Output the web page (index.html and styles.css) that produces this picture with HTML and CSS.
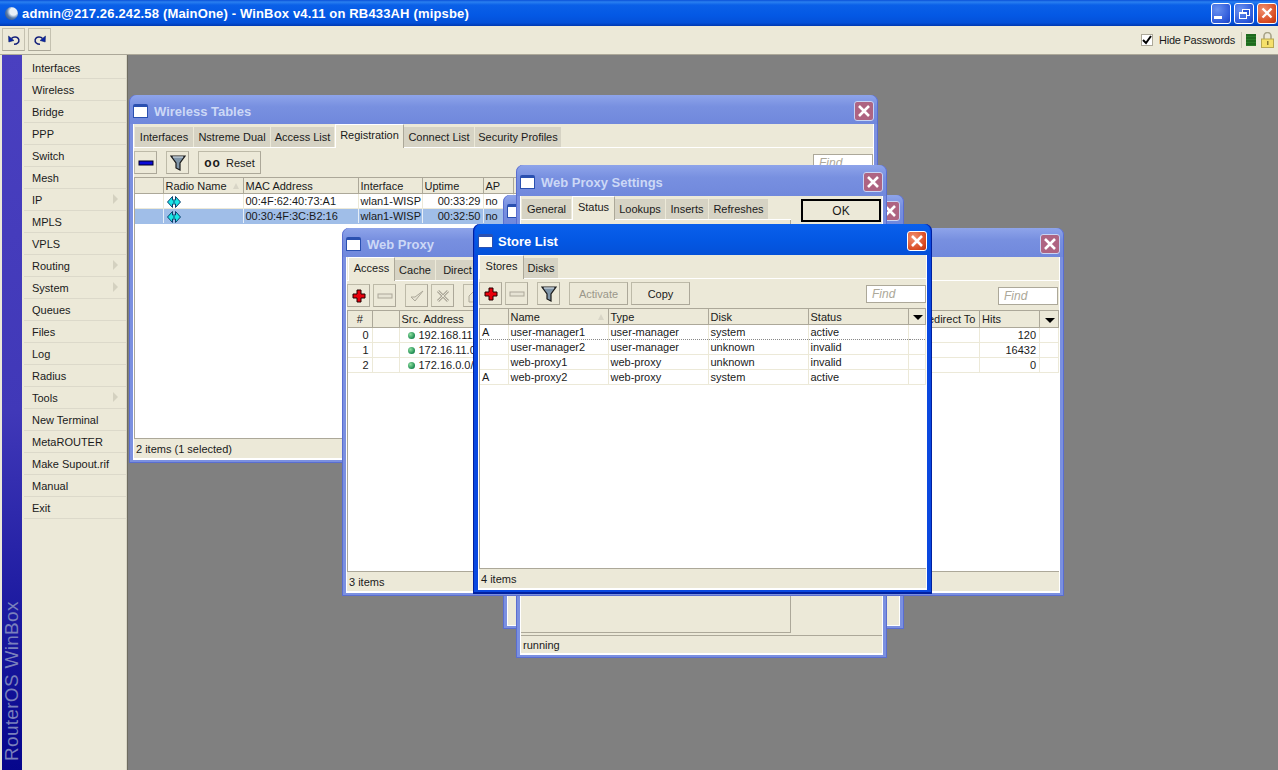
FILE: index.html
```html
<!DOCTYPE html>
<html lang="en">
<head>
    <meta charset="UTF-8">
    <title>admin@217.26.242.58 (MainOne) - WinBox v4.11 on RB433AH (mipsbe)</title>
    <link rel="stylesheet" href="styles.css">
</head>
<body>
    <svg class="defs" width="0" height="0">
        <symbol id="i-x" viewBox="0 0 20 20"><path d="M5 5l10 10M15 5L5 15" stroke="#fff" stroke-width="2.6" fill="none"/></symbol>
        <symbol id="i-plus" viewBox="0 0 16 16"><path d="M6 2h4v4h4v4h-4v4H6v-4H2V6h4z" fill="#e8000c" stroke="#200" stroke-width="1"/></symbol>
        <symbol id="i-minus" viewBox="0 0 16 16"><rect x="1" y="6" width="14" height="4" fill="#0a0ad8" stroke="#002" stroke-width="1"/></symbol>
        <symbol id="i-minus-off" viewBox="0 0 16 16"><rect x="1" y="6" width="14" height="4" fill="#e6e3d4" stroke="#aca899" stroke-width="1"/></symbol>
        <symbol id="i-filter" viewBox="0 0 16 18"><path d="M1 2h14L10 9v7l-4-2V9z" fill="#7f95a8" stroke="#1a1a1a" stroke-width="1.2"/><path d="M3 3h10" stroke="#dfe6ea"/></symbol>
        <symbol id="i-check" viewBox="0 0 16 16"><path d="M2 9l4 4 8-10-8 6z" fill="#e6e3d4" stroke="#aca899"/></symbol>
        <symbol id="i-cross" viewBox="0 0 16 16"><path d="M3 3l10 10M13 3L3 13" stroke="#aca899" stroke-width="3"/><path d="M3 3l10 10M13 3L3 13" stroke="#e6e3d4"/></symbol>
        <symbol id="i-home" viewBox="0 0 16 16"><path d="M8 2l6 6v6H2V8z" fill="#e6e3d4" stroke="#aca899"/></symbol>
        <symbol id="i-link" viewBox="0 0 14 12"><path d="M.5 6L5.500.5V4h3V.5L13.500 6l-5 5.500V8h-3v3.500z" fill="#19e6e6" stroke="#0b3c6c"/><path d="M6 6h2" stroke="#0b3c6c"/></symbol>
        <symbol id="i-undo" viewBox="0 0 16 16"><path d="M5.500 6.500C7 4.500 11.500 4 12.800 7.500c.7 2.800-1.800 4.800-4.800 4.800" fill="none" stroke="#14207a" stroke-width="1.500"/><path d="M2.500 4l.3 6L8 8.500z" fill="#0a24a8" stroke="#0a1f5c" stroke-width=".5"/></symbol>
    </svg>

    <header class="app-title">
        <span class="app-logo"></span>
        <span class="app-caption">admin@217.26.242.58 (MainOne) - WinBox v4.11 on RB433AH (mipsbe)</span>
        <div class="xp-buttons">
            <button class="xp-btn"><span class="glyph-min"></span></button>
            <button class="xp-btn"><span class="glyph-restore"></span></button>
            <button class="xp-btn xp-close"><svg width="20" height="20"><use href="#i-x"/></svg></button>
        </div>
    </header>

    <div class="app-toolbar">
        <button class="tool"><svg width="16" height="16"><use href="#i-undo"/></svg></button>
        <button class="tool"><svg class="flip" width="16" height="16"><use href="#i-undo"/></svg></button>
        <div class="app-right">
            <span class="check-box"><svg width="10" height="10" viewBox="0 0 10 10"><path d="M1 5l3 3 5-7" stroke="#000" stroke-width="2" fill="none"/></svg></span>
            <span class="hide-label">Hide Passwords</span>
            <span class="sep"></span>
            <span class="green-box"></span>
            <svg class="lock" width="13" height="16" viewBox="0 0 13 16">
                <path d="M3 7V4a3.500 3.500 0 0 1 7 0v3" fill="none" stroke="#a8a488" stroke-width="1.600"/>
                <rect x=".5" y="7" width="12" height="8.500" fill="#f5e06a" stroke="#b8a850"/>
                <rect x="6" y="9" width="1.500" height="4" fill="#8a7a30"/>
            </svg>
        </div>
    </div>

    <main class="app-main">
        <div class="brand-strip"><span class="brand-text">RouterOS WinBox</span></div>
        <nav class="menu">
            <a class="menu-item">Interfaces</a>
            <a class="menu-item">Wireless</a>
            <a class="menu-item">Bridge</a>
            <a class="menu-item">PPP</a>
            <a class="menu-item">Switch</a>
            <a class="menu-item">Mesh</a>
            <a class="menu-item has-sub">IP</a>
            <a class="menu-item">MPLS</a>
            <a class="menu-item">VPLS</a>
            <a class="menu-item has-sub">Routing</a>
            <a class="menu-item has-sub">System</a>
            <a class="menu-item">Queues</a>
            <a class="menu-item">Files</a>
            <a class="menu-item">Log</a>
            <a class="menu-item">Radius</a>
            <a class="menu-item has-sub">Tools</a>
            <a class="menu-item">New Terminal</a>
            <a class="menu-item">MetaROUTER</a>
            <a class="menu-item">Make Supout.rif</a>
            <a class="menu-item">Manual</a>
            <a class="menu-item">Exit</a>
        </nav>

        <section class="desktop">
            <!-- Wireless Tables -->
            <div class="win win-wireless">
                <div class="win-title">
                    <span class="win-icon"></span><span class="win-name">Wireless Tables</span>
                    <button class="win-close"><svg width="20" height="20"><use href="#i-x"/></svg></button>
                </div>
                <div class="win-body">
                    <div class="tabs">
                        <span class="tab tab-w1">Interfaces</span>
                        <span class="tab tab-w2">Nstreme Dual</span>
                        <span class="tab tab-w3">Access List</span>
                        <span class="tab tab-w4 active">Registration</span>
                        <span class="tab tab-w5">Connect List</span>
                        <span class="tab tab-w6">Security Profiles</span>
                    </div>
                    <div class="toolbar">
                        <button class="btn"><svg width="16" height="16"><use href="#i-minus"/></svg></button>
                        <button class="btn gap"><svg width="16" height="18"><use href="#i-filter"/></svg></button>
                        <button class="btn gap btn-reset"><b>oo</b>Reset</button>
                        <span class="find">Find</span>
                    </div>
                    <div class="grid-wrap">
                        <table class="grid grid-reg">
                            <colgroup><col><col><col><col><col><col><col></colgroup>
                            <thead><tr><th></th><th class="sorted">Radio Name</th><th>MAC Address</th><th>Interface</th><th>Uptime</th><th>AP</th><th></th></tr></thead>
                            <tbody>
                                <tr><td></td><td><svg class="link" width="14" height="12"><use href="#i-link"/></svg></td><td>00:4F:62:40:73:A1</td><td>wlan1-WISP</td><td class="num">00:33:29</td><td>no</td><td></td></tr>
                                <tr class="selected"><td></td><td><svg class="link" width="14" height="12"><use href="#i-link"/></svg></td><td>00:30:4F:3C:B2:16</td><td>wlan1-WISP</td><td class="num">00:32:50</td><td>no</td><td></td></tr>
                            </tbody>
                        </table>
                    </div>
                    <div class="statusbar">2 items (1 selected)</div>
                </div>
            </div>

            <!-- window hidden behind Web Proxy Settings -->
            <div class="win win-hidden">
                <div class="win-title">
                    <span class="win-icon"></span>
                    <button class="win-close"><svg width="20" height="20"><use href="#i-x"/></svg></button>
                </div>
                <div class="win-body"></div>
            </div>

            <!-- Web Proxy Settings -->
            <div class="win win-settings">
                <div class="win-title">
                    <span class="win-icon"></span><span class="win-name">Web Proxy Settings</span>
                    <button class="win-close"><svg width="20" height="20"><use href="#i-x"/></svg></button>
                </div>
                <div class="win-body">
                    <div class="settings-main">
                        <div class="settings-left">
                            <div class="tabs tabs-settings">
                                <span class="tab tab-s1">General</span>
                                <span class="tab tab-s2 active">Status</span>
                                <span class="tab tab-s3">Lookups</span>
                                <span class="tab tab-s4">Inserts</span>
                                <span class="tab tab-s5">Refreshes</span>
                            </div>
                            <div class="settings-panel"></div>
                        </div>
                        <button class="btn btn-ok">OK</button>
                    </div>
                    <div class="statusbar">running</div>
                </div>
            </div>

            <!-- Web Proxy -->
            <div class="win win-proxy">
                <div class="win-title">
                    <span class="win-icon"></span><span class="win-name">Web Proxy</span>
                    <button class="win-close"><svg width="20" height="20"><use href="#i-x"/></svg></button>
                </div>
                <div class="win-body">
                    <div class="tabs">
                        <span class="tab tab-p1 active">Access</span>
                        <span class="tab tab-p2">Cache</span>
                        <span class="tab tab-p3">Direct</span>
                    </div>
                    <div class="toolbar">
                        <button class="btn"><svg width="16" height="16"><use href="#i-plus"/></svg></button>
                        <button class="btn"><svg width="16" height="16"><use href="#i-minus-off"/></svg></button>
                        <button class="btn gap"><svg width="16" height="16"><use href="#i-check"/></svg></button>
                        <button class="btn"><svg width="16" height="16"><use href="#i-cross"/></svg></button>
                        <button class="btn gap"><svg width="16" height="16"><use href="#i-home"/></svg></button>
                        <span class="find">Find</span>
                    </div>
                    <div class="grid-wrap">
                        <table class="grid grid-proxy">
                            <colgroup><col><col><col><col><col><col></colgroup>
                            <thead><tr><th class="center">#</th><th></th><th>Src. Address</th><th>Redirect To</th><th>Hits</th><th class="menu-col"><span class="drop"></span></th></tr></thead>
                            <tbody>
                                <tr><td class="num">0</td><td></td><td><span class="dot"></span>192.168.11.0/24</td><td></td><td class="num">120</td><td></td></tr>
                                <tr><td class="num">1</td><td></td><td><span class="dot"></span>172.16.11.0/24</td><td></td><td class="num">16432</td><td></td></tr>
                                <tr><td class="num">2</td><td></td><td><span class="dot"></span>172.16.0.0/12</td><td></td><td class="num">0</td><td></td></tr>
                            </tbody>
                        </table>
                    </div>
                    <div class="statusbar">3 items</div>
                </div>
            </div>

            <!-- Store List, active window -->
            <div class="win win-store is-active">
                <div class="win-title">
                    <span class="win-icon"></span><span class="win-name">Store List</span>
                    <button class="win-close"><svg width="20" height="20"><use href="#i-x"/></svg></button>
                </div>
                <div class="win-body">
                    <div class="tabs">
                        <span class="tab tab-t1 active">Stores</span>
                        <span class="tab tab-t2">Disks</span>
                    </div>
                    <div class="toolbar">
                        <button class="btn"><svg width="16" height="16"><use href="#i-plus"/></svg></button>
                        <button class="btn"><svg width="16" height="16"><use href="#i-minus-off"/></svg></button>
                        <button class="btn gap"><svg width="16" height="18"><use href="#i-filter"/></svg></button>
                        <button class="btn gap btn-text is-off">Activate</button>
                        <button class="btn btn-text">Copy</button>
                        <span class="find">Find</span>
                    </div>
                    <div class="grid-wrap">
                        <table class="grid grid-store">
                            <colgroup><col><col><col><col><col><col></colgroup>
                            <thead><tr><th></th><th class="sorted">Name</th><th>Type</th><th>Disk</th><th>Status</th><th class="menu-col"><span class="drop"></span></th></tr></thead>
                            <tbody>
                                <tr class="focused"><td>A</td><td>user-manager1</td><td>user-manager</td><td>system</td><td>active</td><td></td></tr>
                                <tr><td></td><td>user-manager2</td><td>user-manager</td><td>unknown</td><td>invalid</td><td></td></tr>
                                <tr><td></td><td>web-proxy1</td><td>web-proxy</td><td>unknown</td><td>invalid</td><td></td></tr>
                                <tr><td>A</td><td>web-proxy2</td><td>web-proxy</td><td>system</td><td>active</td><td></td></tr>
                            </tbody>
                        </table>
                    </div>
                    <div class="statusbar">4 items</div>
                </div>
            </div>
        </section>
    </main>
</body>
</html>
```

FILE: styles.css
```css
* {
    margin: 0;
    padding: 0;
    box-sizing: border-box;
}

html, body {
    height: 100%;
    overflow: hidden;
}

body {
    display: flex;
    flex-direction: column;
    font-family: "Liberation Sans", Arial, sans-serif;
    font-size: 11px;
    color: #1a1a1a;
    background-color: #ece9d8;
}

.defs {
    position: absolute;
}

button {
    font: inherit;
    color: inherit;
}

/* Main title bar */
.app-title {
    display: flex;
    align-items: center;
    height: 26px;
    padding-left: 5px;
    flex: none;
    background: linear-gradient(#0a50d8 0, #2a80f0 2px, #0a60e8 5px, #0458e4 60%, #0450d8 88%, #0038b0 100%);
}

.app-logo {
    width: 13px;
    height: 13px;
    margin-right: 4px;
    border-radius: 50%;
    background: radial-gradient(circle at 65% 35%, #e8f0f8 0 30%, #5a7ca8 55%, #25406c 100%);
}

.app-caption {
    font-size: 13px;
    font-weight: bold;
    letter-spacing: .16px;
    color: #fff;
    white-space: nowrap;
}

.xp-buttons {
    display: flex;
    gap: 3px;
    margin-left: auto;
    margin-right: 1px;
}

.xp-btn {
    display: flex;
    align-items: center;
    justify-content: center;
    position: relative;
    width: 20px;
    height: 21px;
    border: 1px solid #fff;
    border-radius: 3px;
    background: radial-gradient(circle at 30% 30%, #6a92f0, #2a56d8 75%, #1c3fb8);
}

.xp-close {
    background: radial-gradient(circle at 30% 30%, #f09070, #d84a20 70%, #b83010);
}

.glyph-min {
    width: 8px;
    height: 3px;
    margin: 8px 6px 0 0;
    background-color: #fff;
}

.glyph-restore {
    width: 8px;
    height: 7px;
    margin: 4px 2px 0 0;
    border: 1px solid #fff;
    border-top-width: 2px;
    box-shadow: 3px -3px 0 -1px #2a56d8, 3px -3px 0 0 #fff;
}

/* Top toolbar */
.app-toolbar {
    display: flex;
    align-items: center;
    gap: 3px;
    height: 29px;
    flex: none;
    padding: 0 4px 1px 2px;
    background-color: #ece9d8;
    border-bottom: 1px solid #aca899;
}

.tool {
    display: flex;
    align-items: center;
    justify-content: center;
    width: 23px;
    height: 23px;
    background-color: #ece9d8;
    border: 1px solid #c4c1b0;
    border-bottom-color: #aca899;
}

.flip {
    transform: scaleX(-1);
}

.app-right {
    display: flex;
    align-items: center;
    margin-left: auto;
}

.check-box {
    display: flex;
    align-items: center;
    justify-content: center;
    width: 12px;
    height: 12px;
    background-color: #fff;
    border: 1px solid #aca899;
}

.hide-label {
    margin: 0 6px;
    letter-spacing: -.25px;
}

.sep {
    width: 1px;
    height: 16px;
    background-color: #c8c5b4;
    margin-right: 4px;
}

.green-box {
    width: 10px;
    height: 12px;
    margin-right: 5px;
    background: repeating-linear-gradient(#1e6a1e 0 2px, #2a7c2a 2px 3px);
}

/* Layout below the toolbar */
.app-main {
    display: flex;
    flex: 1;
    min-height: 0;
    padding-left: 2px;
}

.brand-strip {
    display: flex;
    justify-content: center;
    width: 20px;
    flex: none;
    background: linear-gradient(#4a40c0 0, #4038b8 50%, #1c1aa0 78%, #06068c 100%);
}

.brand-text {
    writing-mode: vertical-rl;
    transform: rotate(180deg);
    padding-top: 9px;
    font-size: 19px;
    letter-spacing: .3px;
    color: #7a80bc;
    white-space: nowrap;
}

.menu {
    width: 105px;
    flex: none;
    padding: 2px 0 0 2px;
    background-color: #ece9d8;
    border-right: 1px solid #d8d5c6;
}

.menu-item {
    display: flex;
    align-items: center;
    position: relative;
    height: 22px;
    padding-left: 8px;
    padding-top: 1px;
    border-bottom: 1px solid #dcd9ca;
    white-space: nowrap;
}

.has-sub::after {
    content: "";
    position: absolute;
    right: 8px;
    top: 5px;
    border-left: 5px solid #d4d1c0;
    border-top: 5px solid transparent;
    border-bottom: 5px solid transparent;
}

.desktop {
    position: relative;
    flex: 1;
    background-color: #808080;
    border-left: 1px solid #6e6c60;
}

/* Windows */
.win {
    position: absolute;
    display: flex;
    flex-direction: column;
    padding: 0 4px 3px;
    border-radius: 7px 7px 0 0;
    background-color: #7b90e0;
    box-shadow: inset 0 -1px 0 #5a6ed0, inset 1px 0 0 #5a6ed0, inset -1px 0 0 #5a6ed0;
}

.is-active {
    padding: 0 5px 4px;
    background-color: #0a48e0;
    box-shadow: inset 0 -2px 0 #0020a0, inset 1px 0 0 #0020a0, inset -1px 0 0 #0020a0;
}

.win-wireless {
    left: 1px;
    top: 40px;
    width: 749px;
    height: 368px;
}

.win-hidden {
    left: 375px;
    top: 140px;
    width: 401px;
    height: 434px;
}

.win-settings {
    left: 388px;
    top: 110px;
    width: 371px;
    height: 493px;
}

.win-proxy {
    left: 214px;
    top: 173px;
    width: 722px;
    height: 368px;
}

.win-store {
    left: 345px;
    top: 169px;
    width: 459px;
    height: 370px;
}

.win-title {
    display: flex;
    align-items: center;
    flex: none;
    height: 29px;
    padding: 5px 3px 0;
    margin: 0 -3px;
    background: linear-gradient(#8ea4ea, #7890e0 40%, #7088dc);
    border-radius: 7px 7px 0 0;
}

.is-active .win-title {
    height: 31px;
    background: linear-gradient(#0a60ec, #0458e4 50%, #0450d8);
}

.win-settings .win-title {
    height: 31px;
}

.win-icon {
    width: 15px;
    height: 14px;
    flex: none;
    margin-top: -2px;
    background-color: #fff;
    border: 1px solid #2a50b0;
    border-top-width: 3px;
    border-radius: 2px 2px 0 0;
}

.win-name {
    margin: -2px 0 0 6px;
    font-size: 13px;
    font-weight: bold;
    color: #ccd8f6;
    white-space: nowrap;
}

.is-active .win-name {
    margin-left: 5px;
    color: #fff;
}

.win-close {
    display: flex;
    margin: -2px 0 0 auto;
    width: 20px;
    height: 20px;
    border: 1px solid #c8d4f4;
    border-radius: 3px;
    background-color: #ae6482;
}

.win-close svg {
    margin: -1px;
}

.is-active .win-close {
    border-color: #fff;
    background: radial-gradient(circle at 30% 30%, #f09070, #d84a20 70%, #b83010);
}

.win-body {
    display: flex;
    flex-direction: column;
    flex: 1;
    min-height: 0;
    overflow: hidden;
    background-color: #ece9d8;
    border-bottom: 1px solid #fff;
    border-left: 1px solid #fff;
    border-right: 1px solid #fff;
}

/* Tabs */
.tabs {
    display: flex;
    align-items: flex-end;
    flex: none;
    height: 24px;
    padding-left: 1px;
    border-bottom: 1px solid #fff;
}

.tab {
    display: flex;
    align-items: center;
    justify-content: center;
    height: 20px;
    border-right: 1px solid #ece9d8;
    background-color: #d6d3c4;
    white-space: nowrap;
}

.tab.active {
    position: relative;
    height: 24px;
    margin-bottom: -1px;
    padding-bottom: 4px;
    background-color: #ece9d8;
    border-top: 1px solid #fff;
    border-left: 1px solid #fff;
    border-right: 1px solid #aca899;
}

.tab-w1 { width: 59px; }
.tab-w2 { width: 77px; }
.tab-w3 { width: 64px; }
.tab-w4 { width: 69px; }
.tab-w5 { width: 71px; }
.tab-w6 { width: 87px; }

.tab-s1 { width: 50px; }
.tab-s2 { width: 43px; }
.tab-s3 { width: 51px; }
.tab-s4 { width: 43px; }
.tab-s5 { width: 60px; }

.tab-p1 { width: 47px; }
.tab-p2 { width: 41px; }
.tab-p3 { width: 44px; }

.tab-t1 { width: 45px; }
.tab-t2 { width: 35px; }

.is-active .tabs {
    padding-left: 0;
}

/* Toolbars */
.toolbar {
    display: flex;
    align-items: center;
    gap: 3px;
    flex: none;
    height: 29px;
}

.btn {
    display: flex;
    align-items: center;
    justify-content: center;
    flex: none;
    width: 23px;
    height: 23px;
    background-color: #ece9d8;
    border: 1px solid #bdbaa8;
    border-bottom-color: #aca899;
    border-right-color: #aca899;
}

.gap {
    margin-left: 6px;
}

.btn-reset {
    width: 63px;
    gap: 5px;
}

.btn-reset b {
    font-size: 12px;
    letter-spacing: 1px;
}

.btn-text {
    width: 59px;
}

.is-off {
    color: #9a978a;
}

.find {
    display: flex;
    align-items: center;
    width: 60px;
    height: 18px;
    margin-left: auto;
    padding-left: 5px;
    font-size: 12px;
    font-style: italic;
    color: #aca899;
    background-color: #fff;
    border: 1px solid #aca899;
}

.win-proxy .find {
    margin-right: 1px;
}

/* Tables */
.grid-wrap {
    flex: 1;
    min-height: 0;
    overflow: hidden;
    background-color: #fff;
    border-left: 1px solid #aca899;
}

.grid {
    table-layout: fixed;
    width: 100%;
    border-collapse: collapse;
}

.grid th {
    height: 16px;
    padding-left: 2px;
    font-weight: normal;
    text-align: left;
    white-space: nowrap;
    overflow: hidden;
    background-color: #ece9d8;
    border-top: 1px solid #aca899;
    border-right: 1px solid #aca899;
    border-bottom: 1px solid #aca899;
}

.grid-proxy th {
    height: 17px;
}

.grid td {
    height: 15px;
    padding: 0 2px;
    white-space: nowrap;
    overflow: hidden;
    border-right: 1px solid #ece9d8;
    border-bottom: 1px solid #ece9d8;
}

.grid .num {
    text-align: right;
    padding-right: 3px;
}

.grid-reg .num {
    padding-right: 2px;
}

.grid .center {
    text-align: center;
    padding-left: 0;
}

.sorted {
    position: relative;
}

.sorted::after {
    content: "";
    position: absolute;
    right: 4px;
    top: 5px;
    border-left: 3px solid transparent;
    border-right: 3px solid transparent;
    border-bottom: 6px solid #d8d5c6;
}

.menu-col {
    padding-left: 0;
}

.drop {
    display: block;
    width: 0;
    margin: 2px auto 0;
    border-left: 5px solid transparent;
    border-right: 5px solid transparent;
    border-top: 5px solid #000;
}

.selected td {
    background-color: #a0bee8;
    border-right-color: #e6eef8;
    border-bottom-color: #a0bee8;
}

.focused td {
    border-top: 1px dotted #888;
    border-bottom: 1px dotted #888;
}

.link {
    display: block;
    margin: 1px 0 0 1px;
}

.dot {
    display: inline-block;
    width: 7px;
    height: 7px;
    margin: 0 4px 0 6px;
    border-radius: 50%;
    background: radial-gradient(circle at 35% 35%, #8fe0a0, #1c8a50 70%, #0c5030);
}

.grid-reg col:nth-child(1) { width: 28px; }
.grid-reg col:nth-child(2) { width: 80px; }
.grid-reg col:nth-child(3) { width: 115px; }
.grid-reg col:nth-child(4) { width: 64px; }
.grid-reg col:nth-child(5) { width: 61px; }
.grid-reg col:nth-child(6) { width: 30px; }

.grid-proxy col:nth-child(1) { width: 24px; }
.grid-proxy col:nth-child(2) { width: 27px; }
.grid-proxy col:nth-child(4) { width: 62px; }
.grid-proxy col:nth-child(5) { width: 60px; }
.grid-proxy col:nth-child(6) { width: 19px; }

.grid-store col:nth-child(1) { width: 28px; }
.grid-store col:nth-child(2) { width: 100px; }
.grid-store col:nth-child(3) { width: 100px; }
.grid-store col:nth-child(4) { width: 100px; }
.grid-store col:nth-child(5) { width: 100px; }

/* Status bars */
.statusbar {
    display: flex;
    align-items: center;
    flex: none;
    height: 21px;
    padding-left: 2px;
    background-color: #ece9d8;
    border-top: 1px solid #aca899;
    border-bottom: 1px solid #fff;
}

.win-settings .statusbar {
    height: 19px;
}

/* Web Proxy Settings body */
.settings-main {
    display: flex;
    flex: 1;
    min-height: 0;
}

.settings-left {
    display: flex;
    flex-direction: column;
    width: 270px;
}

.settings-panel {
    flex: 1;
    margin-bottom: 2px;
    border-right: 1px solid #aca899;
    border-bottom: 1px solid #aca899;
}

.btn-ok {
    width: 80px;
    height: 23px;
    margin: 3px 0 0 10px;
    font-size: 12px;
    border: 2px solid #000;
}
```
